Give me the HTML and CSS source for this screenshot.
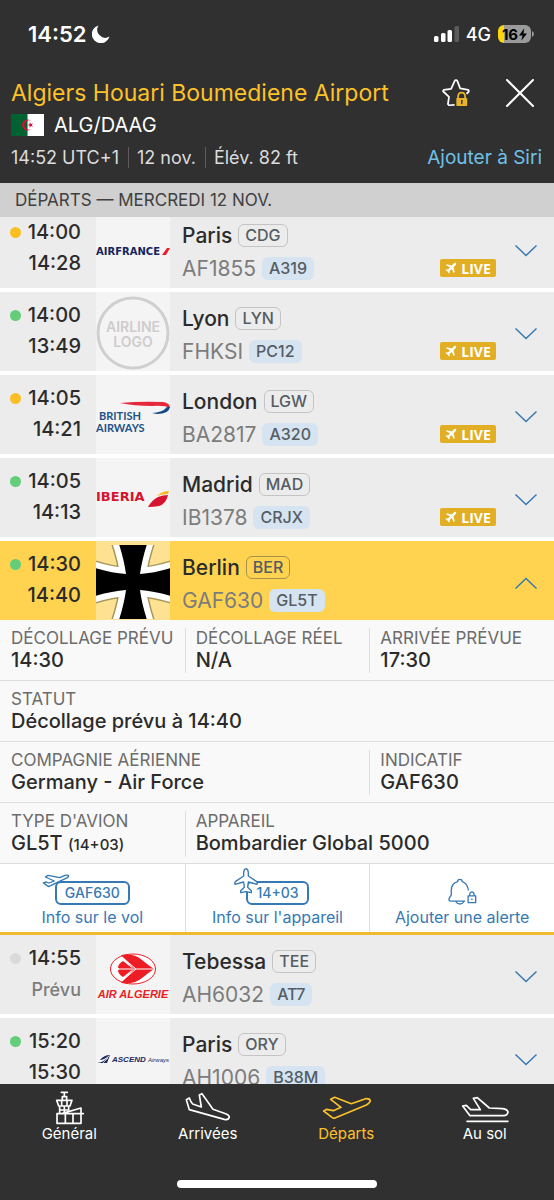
FILE: index.html
```html
<!DOCTYPE html>
<html lang="fr">
<head>
    <meta charset="UTF-8">
    <meta name="viewport" content="width=device-width, initial-scale=1.0">
    <title>Algiers Houari Boumediene Airport</title>
    <link rel="stylesheet" href="styles.css">
</head>
<body>
    <!-- Shared icons -->
    <svg class="sprite" aria-hidden="true">
        <symbol id="chevron" viewBox="0 0 24 14">
            <path d="M1.5 1.5 12 11.5 22.5 1.5" fill="none" stroke="currentColor" stroke-width="1.5"/>
        </symbol>
        <symbol id="live-plane" viewBox="0 0 24 24">
            <path d="M22 2c-1.5-1.2-3.5 0-5 1.5L13.5 7 4 4.5 2 6.5l8 4-4 4.5-3.5-.5L1 16l4 3 3 4 1.5-1.5L9 18l4.5-4 4 8 2-2L17 10.5l3.5-3.5C22 5.5 23.2 3.5 22 2z" fill="currentColor"/>
        </symbol>
    </svg>

    <div class="app">
        <header class="header">
            <div class="status-bar">
                <div class="status-left">
                    <span>14:52</span>
                    <svg class="moon" viewBox="0 0 18 18" aria-hidden="true"><path d="M6.5 .5A9 9 0 1 0 17.5 11.5 8 8 0 0 1 6.5 .5z" fill="currentColor"/></svg>
                </div>
                <div class="status-right">
                    <svg class="signal" viewBox="0 0 25 16" aria-hidden="true">
                        <rect x="0" y="10" width="4.5" height="6" rx="1.5" fill="#fff"/>
                        <rect x="7" y="7" width="4.5" height="9" rx="1.5" fill="#fff"/>
                        <rect x="13.5" y="4" width="4.5" height="12" rx="1.5" fill="#fff"/>
                        <rect x="20.5" y="0" width="4.5" height="16" rx="1.5" fill="#5c5c5c"/>
                    </svg>
                    <span class="network">4G</span>
                    <span class="battery">16<svg viewBox="0 0 9 14" aria-hidden="true"><path d="M6 0 0 8h4L2.5 14 9 6H5z" fill="#000"/></svg></span>
                    <svg class="battery-tip" viewBox="0 0 2 6" aria-hidden="true"><path d="M0 0Q2 1 2 3T0 6z" fill="#9b9b9b"/></svg>
                </div>
            </div>
            <div class="title-row">
                <h1 class="title">Algiers Houari Boumediene Airport</h1>
                <button class="icon-btn favorite" aria-label="Favori">
                    <svg viewBox="0 0 80 80" aria-hidden="true">
                        <path d="M36 74 20 75 17 72 20 51 3 35 5 31 26 28 36 6q4-6 8 0L52 27 75 31q3 3 0 7L70 42" fill="none" stroke="#fff" stroke-width="5" stroke-linejoin="round"/>
                        <path d="M46 56v-6q0-11 10-11t10 11v6" fill="none" stroke="#e9b429" stroke-width="5"/>
                        <rect x="41" y="54" width="31" height="23" rx="2" fill="#e9b429"/>
                        <path d="M56.5 61v9" stroke="#303030" stroke-width="4" stroke-linecap="round"/>
                    </svg>
                </button>
                <button class="icon-btn close" aria-label="Fermer">
                    <svg viewBox="0 0 28 28" aria-hidden="true"><path d="M1 1 27 27M27 1 1 27" stroke="#fff" stroke-width="2" stroke-linecap="round"/></svg>
                </button>
            </div>
            <div class="code-row">
                <svg class="flag" viewBox="0 0 33 22" aria-hidden="true">
                    <path d="M0 0h16.5v22H0z" fill="#006233"/>
                    <path d="M16.5 0H33v22H16.5z" fill="#fff"/>
                    <path d="M20.5 7.2A5.5 5.5 0 1 0 20.5 14.8 4.5 4.5 0 1 1 20.5 7.2z" fill="#d21034"/>
                    <path d="M16.5 11 18.7 10.3 18.7 8 20 9.9 22 9.2 20.8 11 22 12.8 20 12.1 18.7 14 18.7 11.7z" fill="#d21034"/>
                </svg>
                <span>ALG/DAAG</span>
            </div>
            <div class="meta-row">
                <span>14:52 UTC+1</span>
                <span>12 nov.</span>
                <span>Élév. 82 ft</span>
                <a class="siri-link" href="#">Ajouter à Siri</a>
            </div>
        </header>

        <main class="board">
            <h2 class="date-bar">DÉPARTS — MERCREDI 12 NOV.</h2>

            <div class="flights">
                <article class="flight">
                    <div class="times"><span class="dot dot-yellow"></span><time>14:00</time><time>14:28</time></div>
                    <svg class="logo" viewBox="0 0 74 79" role="img" aria-label="Air France">
                        <text class="logo-airfrance" x="0" y="46">AIRFRANCE</text>
                        <path d="M66 46 71 39H74L70 46z" fill="#e8202a"/>
                    </svg>
                    <div class="info">
                        <div class="line"><span class="city">Paris</span><span class="iata">CDG</span></div>
                        <div class="line"><span class="number">AF1855</span><span class="aircraft">A319</span></div>
                    </div>
                    <span class="live"><svg aria-hidden="true"><use href="#live-plane"/></svg>LIVE</span>
                    <button class="toggle" aria-label="Détails"><svg aria-hidden="true"><use href="#chevron"/></svg></button>
                </article>

                <article class="flight">
                    <div class="times"><span class="dot dot-green"></span><time>14:00</time><time>13:49</time></div>
                    <svg class="logo" viewBox="0 0 74 79" role="img" aria-label="Airline logo">
                        <circle cx="37" cy="41" r="35" fill="none" stroke="#cfcfcf" stroke-width="3"/>
                        <text class="logo-placeholder" x="37" y="40">AIRLINE</text>
                        <text class="logo-placeholder" x="37" y="55">LOGO</text>
                    </svg>
                    <div class="info">
                        <div class="line"><span class="city">Lyon</span><span class="iata">LYN</span></div>
                        <div class="line"><span class="number">FHKSI</span><span class="aircraft">PC12</span></div>
                    </div>
                    <span class="live"><svg aria-hidden="true"><use href="#live-plane"/></svg>LIVE</span>
                    <button class="toggle" aria-label="Détails"><svg aria-hidden="true"><use href="#chevron"/></svg></button>
                </article>

                <article class="flight">
                    <div class="times"><span class="dot dot-yellow"></span><time>14:05</time><time>14:21</time></div>
                    <svg class="logo" viewBox="0 0 74 79" role="img" aria-label="British Airways">
                        <path d="M24 28Q45 26 67 27 74 28 74 33 68 30 56 31 38 31 24 28z" fill="#e5283b"/>
                        <path d="M74 32Q73 39 61 39L56 38Q66 37 69 34 71 31 74 32z" fill="#164a86"/>
                        <text class="logo-british" x="3" y="45">BRITISH</text>
                        <text class="logo-british" x="0" y="57">AIRWAYS</text>
                    </svg>
                    <div class="info">
                        <div class="line"><span class="city">London</span><span class="iata">LGW</span></div>
                        <div class="line"><span class="number">BA2817</span><span class="aircraft">A320</span></div>
                    </div>
                    <span class="live"><svg aria-hidden="true"><use href="#live-plane"/></svg>LIVE</span>
                    <button class="toggle" aria-label="Détails"><svg aria-hidden="true"><use href="#chevron"/></svg></button>
                </article>

                <article class="flight">
                    <div class="times"><span class="dot dot-green"></span><time>14:05</time><time>14:13</time></div>
                    <svg class="logo" viewBox="0 0 74 79" role="img" aria-label="Iberia">
                        <text class="logo-iberia" x="0" y="43">IBERIA</text>
                        <path d="M52 49Q56 42 62 39 67 37 72 37 70 46 63 48 58 49 52 49z" fill="#d7142f"/>
                        <path d="M61 38Q66 33 73 33L72 36Q66 36 61 38z" fill="#f9b91c"/>
                    </svg>
                    <div class="info">
                        <div class="line"><span class="city">Madrid</span><span class="iata">MAD</span></div>
                        <div class="line"><span class="number">IB1378</span><span class="aircraft">CRJX</span></div>
                    </div>
                    <span class="live"><svg aria-hidden="true"><use href="#live-plane"/></svg>LIVE</span>
                    <button class="toggle" aria-label="Détails"><svg aria-hidden="true"><use href="#chevron"/></svg></button>
                </article>

                <!-- Expanded flight -->
                <article class="flight open">
                    <div class="times"><span class="dot dot-green"></span><time>14:30</time><time>14:40</time></div>
                    <svg class="logo" viewBox="0 0 74 79" role="img" aria-label="Germany - Air Force">
                        <svg x="0" y="4" width="74" height="74" viewBox="0 4 74 74">
                            <path d="M22 0Q28 18 30 33 15 32-4 26V56Q15 50 30 49 28 64 22 82H52Q46 64 44 49 59 50 78 56V26Q59 32 44 33 46 18 52 0z" fill="none" stroke="#a8965c" stroke-width="15"/>
                            <path d="M22 0Q28 18 30 33 15 32-4 26V56Q15 50 30 49 28 64 22 82H52Q46 64 44 49 59 50 78 56V26Q59 32 44 33 46 18 52 0z" fill="none" stroke="#fff" stroke-width="12"/>
                            <path d="M22 0Q28 18 30 33 15 32-4 26V56Q15 50 30 49 28 64 22 82H52Q46 64 44 49 59 50 78 56V26Q59 32 44 33 46 18 52 0z" fill="#000"/>
                        </svg>
                    </svg>
                    <div class="info">
                        <div class="line"><span class="city">Berlin</span><span class="iata">BER</span></div>
                        <div class="line"><span class="number">GAF630</span><span class="aircraft">GL5T</span></div>
                    </div>
                    <button class="toggle" aria-label="Détails" aria-expanded="true"><svg aria-hidden="true"><use href="#chevron"/></svg></button>
                </article>

                <section class="details">
                    <dl class="detail-row">
                        <div class="cell"><dt>DÉCOLLAGE PRÉVU</dt><dd>14:30</dd></div>
                        <div class="cell"><dt>DÉCOLLAGE RÉEL</dt><dd>N/A</dd></div>
                        <div class="cell"><dt>ARRIVÉE PRÉVUE</dt><dd>17:30</dd></div>
                    </dl>
                    <dl class="detail-row">
                        <div class="cell cell-full"><dt>STATUT</dt><dd>Décollage prévu à 14:40</dd></div>
                    </dl>
                    <dl class="detail-row">
                        <div class="cell cell-wide"><dt>COMPAGNIE AÉRIENNE</dt><dd>Germany - Air Force</dd></div>
                        <div class="cell"><dt>INDICATIF</dt><dd>GAF630</dd></div>
                    </dl>
                    <dl class="detail-row">
                        <div class="cell"><dt>TYPE D'AVION</dt><dd>GL5T <small>(14+03)</small></dd></div>
                        <div class="cell cell-wide"><dt>APPAREIL</dt><dd>Bombardier Global 5000</dd></div>
                    </dl>
                    <div class="actions">
                        <button class="action">
                            <span class="action-icon">
                                <span class="tag">GAF630<svg class="tag-plane" viewBox="0 0 84 42" aria-hidden="true"><path d="M4 27 13 24 21 27 37 21 10 9 18 4 53 11 69 4Q80 2 80 6 79 11 72 13L57 20 20 38z"/></svg></span>
                            </span>
                            Info sur le vol
                        </button>
                        <button class="action">
                            <span class="action-icon">
                                <span class="tag">14+03<svg class="tag-plane tag-plane-up" viewBox="0 0 72 78" aria-hidden="true"><path d="M29 24V13Q30 3 36 2 42 3 43 13V24L67 40Q71 44 69 49L43 42 41 58 52 68V74L36 71 20 74V68L31 58 29 42 3 49Q1 44 5 40z"/></svg></span>
                            </span>
                            Info sur l'appareil
                        </button>
                        <button class="action">
                            <span class="action-icon">
                                <svg class="bell" viewBox="0 0 88 80" aria-hidden="true">
                                    <path d="M52 69H6Q1 66 4 60L10 50V35Q11 15 29 10 29 3 36 3T43 10Q59 15 62 37M24 70Q27 78 36 78T48 70"/>
                                    <path d="M61 53H84V74H61zM66 53V48Q67 41 72.5 41T79 48V53M72.5 61V66"/>
                                </svg>
                            </span>
                            Ajouter une alerte
                        </button>
                    </div>
                </section>

                <article class="flight">
                    <div class="times"><span class="dot dot-grey"></span><time>14:55</time><span class="planned">Prévu</span></div>
                    <svg class="logo" viewBox="0 0 74 79" role="img" aria-label="Air Algerie">
                        <ellipse cx="37" cy="34" rx="22.5" ry="15" fill="#fff" stroke="#ee1c25" stroke-width="1"/>
                        <path d="M25 20Q38 18 46 25 52 30 58 34 52 38 46 43 38 50 25 48L37 35H23V33H37z" fill="#ee1c25"/>
                        <path d="M27 26 36 33H22Q22 29 27 26zM27 42 36 35H22Q22 39 27 42z" fill="#ee1c25"/>
                        <path d="M23 34H58M27 23 40 34 27 45" fill="none" stroke="#fff" stroke-width="1"/>
                        <text class="logo-algerie" x="37" y="63">AIR ALGERIE</text>
                    </svg>
                    <div class="info">
                        <div class="line"><span class="city">Tebessa</span><span class="iata">TEE</span></div>
                        <div class="line"><span class="number">AH6032</span><span class="aircraft">AT7</span></div>
                    </div>
                    <button class="toggle" aria-label="Détails"><svg aria-hidden="true"><use href="#chevron"/></svg></button>
                </article>

                <article class="flight">
                    <div class="times"><span class="dot dot-green"></span><time>15:20</time><time>15:30</time></div>
                    <svg class="logo" viewBox="0 0 74 79" role="img" aria-label="Ascend Airways">
                        <path d="M1 45Q9 44 14 37L11 45zM4 42Q8 37 14 37 9 42 4 42z" fill="#1d2a5c"/>
                        <path d="M2 44Q9 42 13 38M7 45 12 40" fill="none" stroke="#f4f4f4" stroke-width=".7"/>
                        <text class="logo-ascend" x="16" y="44">ASCEND</text>
                        <text class="logo-ascend-small" x="52" y="44">Airways</text>
                    </svg>
                    <div class="info">
                        <div class="line"><span class="city">Paris</span><span class="iata">ORY</span></div>
                        <div class="line"><span class="number">AH1006</span><span class="aircraft">B38M</span></div>
                    </div>
                    <button class="toggle" aria-label="Détails"><svg aria-hidden="true"><use href="#chevron"/></svg></button>
                </article>
            </div>
        </main>

        <nav class="tab-bar">
            <div class="tabs">
                <a class="tab" href="#">
                    <svg viewBox="0 0 136 102" aria-hidden="true"><path d="M43 4H61M52 4V16M46 17H59V27M46 17V27M29 28H75L69 45H35zM44 28V45M60 28V45M38 46V68M52 46V68M65 46V58M38 57H65M30 68H102V97H30zM55 68V97M78 68V97M44 68 102 51V97M78 68H109"/></svg>
                    Général
                </a>
                <a class="tab" href="#">
                    <svg viewBox="0 0 136 102" aria-hidden="true"><path d="M4 26 13 21Q17 33 23 39L49 48 43 12 51 8 84 55 124 69Q133 73 133 79 130 88 118 85L13 56z"/></svg>
                    Arrivées
                </a>
                <a class="tab active" href="#">
                    <svg viewBox="0 0 148 102" aria-hidden="true"><path d="M5 60 14 55 34 59 57 49 26 25 38 19 88 38 131 23Q144 22 145 30 143 37 133 42L37 82 31 80z"/></svg>
                    Départs
                </a>
                <a class="tab" href="#">
                    <svg viewBox="0 0 144 102" aria-hidden="true"><path d="M5 45 16 43 29 56H58L37 22 49 20 85 51 125 53Q139 55 141 63 140 73 130 74H27zM18 91H141"/></svg>
                    Au sol
                </a>
            </div>
            <div class="home-indicator"></div>
        </nav>
    </div>
</body>
</html>
```

FILE: styles.css
```css
* {
    box-sizing: border-box;
}

body {
    font-family: Inter, "Liberation Sans", sans-serif;
    margin: 0;
    background: #303030;
    color: #2b2b2b;
}

button {
    font: inherit;
    background: none;
    border: none;
    padding: 0;
    cursor: pointer;
}

a {
    text-decoration: none;
}

.sprite {
    position: absolute;
    width: 0;
    height: 0;
}

.app {
    display: flex;
    flex-direction: column;
    height: 100vh;
}

/* Header */
.header {
    background: #303030;
    color: #fff;
    padding: 0 12px 12px 11px;
}

.status-bar {
    display: flex;
    justify-content: space-between;
    align-items: center;
    height: 68px;
    padding: 0 10px 0 17px;
    margin-bottom: 5px;
}

.status-left,
.status-right {
    display: flex;
    align-items: center;
}

.status-left {
    gap: 5px;
    font-size: 22px;
    font-weight: 600;
}

.moon {
    width: 18px;
    height: 18px;
}

.signal {
    width: 25px;
    height: 16px;
}

.network {
    margin: 0 7px;
    font-size: 18px;
    font-weight: 500;
}

.battery {
    display: flex;
    align-items: center;
    justify-content: center;
    gap: 1px;
    width: 33px;
    height: 18px;
    border-radius: 6px;
    background: linear-gradient(to right, #ffd60a 6px, #9b9b9b 6px);
    color: #000;
    font-size: 15px;
    font-weight: 700;
}

.battery svg {
    width: 8px;
    height: 13px;
}

.battery-tip {
    width: 2px;
    height: 6px;
    margin: 0 -2px 0 1px;
}

.title-row {
    display: flex;
    align-items: center;
    height: 40px;
}

.title {
    flex: 1;
    margin: 0;
    color: #fdc229;
    font-size: 23px;
    font-weight: 400;
    white-space: nowrap;
}

.icon-btn svg {
    display: block;
    width: 28px;
    height: 28px;
}

.close {
    margin: 0 8px 0 36px;
}

.code-row {
    display: flex;
    align-items: center;
    gap: 10px;
    height: 24px;
    margin-bottom: 6px;
    font-size: 20px;
}

.flag {
    width: 33px;
    height: 22px;
}

.meta-row {
    display: flex;
    align-items: center;
    height: 28px;
    font-size: 18px;
    color: #dcdcdc;
    white-space: nowrap;
}

.meta-row span + span {
    border-left: 1px solid #5c5c5c;
    margin-left: 9px;
    padding-left: 8px;
}

.siri-link {
    margin-left: auto;
    color: #6fc1e8;
    font-size: 19px;
}

/* Departure board */
.board {
    flex: 1;
    min-height: 0;
    overflow-y: auto;
    scrollbar-width: none;
    background: #fff;
}

.date-bar {
    position: sticky;
    top: 0;
    z-index: 1;
    margin: 0;
    padding: 0 15px;
    background: #d0d0d0;
    color: #404040;
    font-size: 17px;
    font-weight: 400;
    line-height: 34px;
}

.flights {
    margin-top: -8px;
}

.flight {
    display: flex;
    align-items: stretch;
    height: 79px;
    margin-bottom: 4px;
    background: #ececec;
}

.flight.open {
    margin-bottom: 0;
    background: #ffd34f;
}

.times {
    display: grid;
    grid-template-columns: 11px 1fr;
    grid-template-rows: 30px 32px;
    align-items: center;
    justify-items: end;
    width: 96px;
    padding: 8px 15px 0 10px;
    font-size: 20px;
    font-weight: 500;
}

.times > :last-child {
    grid-column: 2;
}

.times .planned {
    color: #7c7c7c;
    font-size: 18px;
}

.dot {
    width: 11px;
    height: 11px;
    border-radius: 50%;
}

.dot-yellow {
    background: #fbbf24;
}

.dot-green {
    background: #64cd7a;
}

.dot-grey {
    background: #dadada;
}

.logo {
    width: 74px;
    height: 79px;
    background: #f4f4f4;
}

.open .logo {
    background: #ffe291;
}

.info {
    flex: 1;
    padding: 10px 0 0 12px;
}

.line {
    display: flex;
    align-items: center;
    gap: 6px;
    height: 33px;
}

.city {
    font-size: 21px;
    font-weight: 500;
}

.number {
    color: #7c7c7c;
    font-size: 21px;
}

.iata,
.aircraft {
    border-radius: 6px;
    color: #555c63;
    font-size: 16px;
    font-weight: 500;
    line-height: 21px;
}

.iata {
    border: 1px solid #c4c4c4;
    padding: 0 6px;
}

.open .iata {
    border-color: #a8924e;
}

.aircraft {
    background: #d6e4f1;
    padding: 1px 7px;
}

.live {
    display: flex;
    align-items: center;
    justify-content: center;
    gap: 4px;
    align-self: flex-end;
    width: 56px;
    height: 18px;
    margin-bottom: 11px;
    border-radius: 2px;
    background: #e1ae24;
    color: #fff;
    font-family: "Open Sans", sans-serif;
    font-size: 14px;
    font-weight: 700;
}

.live svg {
    width: 12px;
    height: 12px;
}

.toggle {
    padding: 5px 16px 0 18px;
    color: #3679b4;
}

.toggle svg {
    display: block;
    width: 24px;
    height: 14px;
}

.open .toggle svg {
    transform: rotate(180deg);
}

/* Airline logos */
.logo-airfrance,
.logo-iberia {
    font-family: "DejaVu Sans", sans-serif;
    font-weight: 700;
}

.logo-airfrance {
    fill: #14245c;
    font-size: 10px;
}

.logo-iberia {
    fill: #d7142f;
    font-size: 13px;
}

.logo-placeholder {
    fill: #cfcccd;
    font-size: 14px;
    font-weight: 600;
    text-anchor: middle;
}

.logo-british {
    fill: #1d5189;
    font-family: Lato, sans-serif;
    font-size: 11px;
    font-weight: 700;
}

.logo-algerie,
.logo-ascend,
.logo-ascend-small {
    font-family: "Liberation Sans", sans-serif;
    font-style: italic;
    font-weight: 700;
}

.logo-algerie {
    fill: #ee1c25;
    font-size: 11px;
    text-anchor: middle;
}

.logo-ascend {
    fill: #1d2a5c;
    font-size: 8px;
}

.logo-ascend-small {
    fill: #1d2a5c;
    font-size: 6px;
    font-weight: 400;
}

/* Flight details */
.details {
    background: #f9f9f9;
    border-bottom: 3px solid #efb930;
}

.detail-row {
    display: grid;
    grid-template-columns: repeat(3, 1fr);
    height: 61px;
    margin: 0;
    padding: 8px 0;
    border-bottom: 1px solid #dedede;
}

.cell {
    border-left: 1px solid #dedede;
    padding-left: 10px;
    white-space: nowrap;
}

.cell:first-child {
    border-left-color: transparent;
}

.cell-wide {
    grid-column: span 2;
}

.cell-full {
    grid-column: span 3;
}

.cell dt {
    color: #6c6c6c;
    font-size: 17px;
    line-height: 20px;
}

.cell dd {
    margin: 0;
    font-size: 20px;
    font-weight: 500;
    line-height: 25px;
}

.cell small {
    font-size: 15px;
}

.actions {
    display: grid;
    grid-template-columns: repeat(3, 1fr);
    height: 68px;
    background: #fff;
}

.action {
    display: flex;
    flex-direction: column;
    align-items: center;
    border-left: 1px solid #dedede;
    color: #3679b4;
    font-size: 16px;
    line-height: 20px;
    white-space: nowrap;
}

.action:first-child {
    border-left: none;
}

.action-icon {
    display: flex;
    align-items: flex-end;
    height: 43px;
    padding-bottom: 2px;
}

.tag {
    position: relative;
    padding: 0 8px;
    border: 2px solid #3679b4;
    border-radius: 6px;
    font-size: 14px;
    font-weight: 500;
}

.tag-plane {
    position: absolute;
    top: -9px;
    left: -15px;
    width: 28px;
    height: 14px;
}

.tag-plane-up {
    top: -15px;
    left: -14px;
    width: 24px;
    height: 26px;
}

.tag-plane path,
.bell path {
    fill: #fff;
    stroke: #3679b4;
    stroke-width: 4;
    stroke-linejoin: round;
}

.bell {
    width: 29px;
    height: 27px;
}

/* Bottom tabs */
.tab-bar {
    display: flex;
    flex-direction: column;
    justify-content: space-between;
    align-items: center;
    height: 116px;
    padding: 7px 0 12px;
    background: #303030;
}

.tabs {
    display: grid;
    grid-template-columns: repeat(4, 1fr);
    width: 100%;
}

.tab {
    display: flex;
    flex-direction: column;
    align-items: center;
    color: #fff;
    font-size: 15px;
    line-height: 18px;
}

.tab.active {
    color: #fdc229;
}

.tab svg {
    height: 34px;
    fill: none;
    stroke: currentColor;
    stroke-width: 5;
    stroke-linejoin: round;
    stroke-linecap: round;
}

.home-indicator {
    width: 36%;
    height: 8px;
    border-radius: 4px;
    background: #fff;
}
```
